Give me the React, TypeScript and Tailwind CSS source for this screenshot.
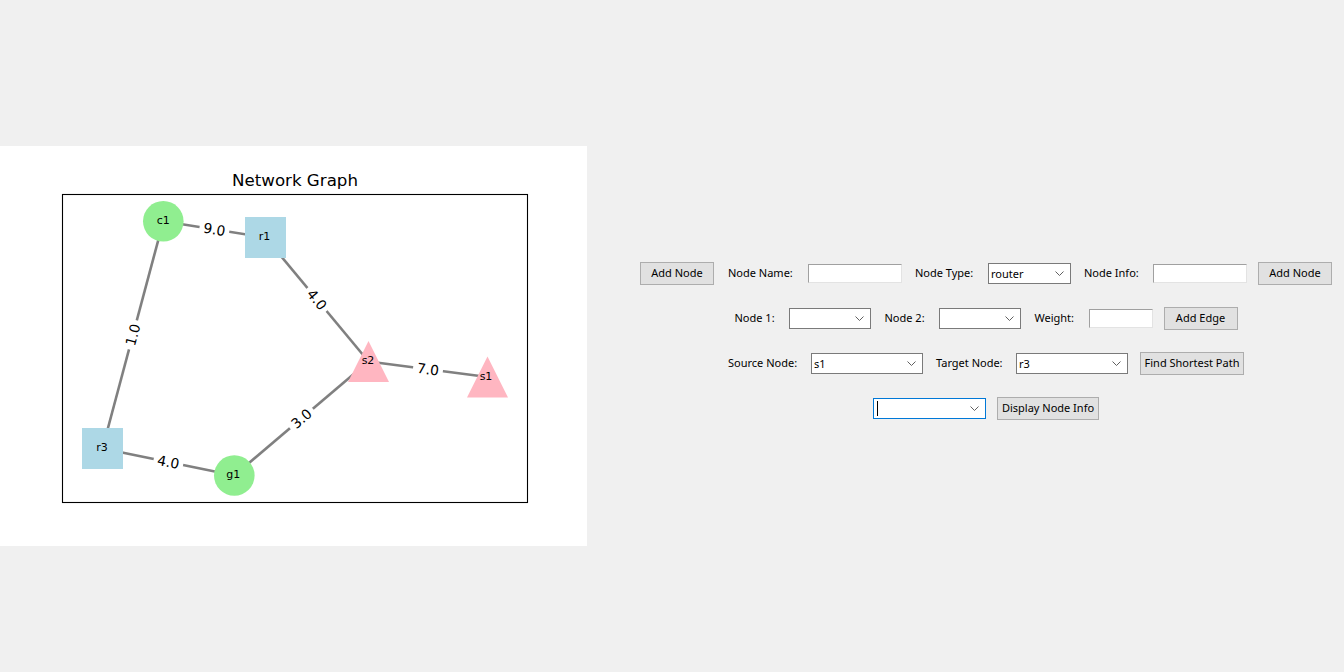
import React from "react";

const DJ = "'DejaVu Sans', 'Liberation Sans', sans-serif";

type EL = { x: number; y: number; a: number; t: string };

function EdgeLabel({ x, y, a, t }: EL) {
  const w = 30;
  const h = 18;
  return (
    <g transform={`translate(${x} ${y}) rotate(${a})`}>
      <rect x={-w / 2} y={-h / 2} width={w} height={h} rx={4} fill="#ffffff" />
      <text
        x={0}
        y={0}
        textAnchor="middle"
        dominantBaseline="central"
        fontFamily={DJ}
        fontSize={13.9}
        fill="#000"
      >
        {t}
      </text>
    </g>
  );
}

function Graph() {
  const c1 = { x: 163.3, y: 221.3 };
  const r1 = { x: 265.5, y: 237.5 };
  const s2 = { x: 368.5, y: 361.5 };
  const s1 = { x: 487.5, y: 377 };
  const r3 = { x: 102.5, y: 448.5 };
  const g1 = { x: 234.3, y: 475.5 };
  const edges = [
    [c1, r1],
    [r1, s2],
    [s2, s1],
    [g1, s2],
    [r3, g1],
    [r3, c1],
  ];
  const labels: EL[] = [
    { x: 214.4, y: 229.4, a: 9, t: "9.0" },
    { x: 317, y: 299.5, a: 50.3, t: "4.0" },
    { x: 428, y: 369.3, a: 7.4, t: "7.0" },
    { x: 301.4, y: 418.5, a: -40.3, t: "3.0" },
    { x: 168.4, y: 462, a: 11.6, t: "4.0" },
    { x: 132.9, y: 334.9, a: -75, t: "1.0" },
  ];
  const nodeText = (x: number, y: number, t: string) => (
    <text
      x={x}
      y={y}
      textAnchor="middle"
      dominantBaseline="central"
      fontFamily={DJ}
      fontSize={11}
      fill="#000"
    >
      {t}
    </text>
  );
  const tri = (p: { x: number; y: number }) =>
    `${p.x},${p.y - 20.5} ${p.x - 20.5},${p.y + 20.5} ${p.x + 20.5},${p.y + 20.5}`;
  return (
    <svg width={587} height={400} viewBox="0 146 587 400" className="block">
      <text
        x={295}
        y={180}
        textAnchor="middle"
        dominantBaseline="central"
        fontFamily={DJ}
        fontSize={16.67}
        fill="#000"
      >
        Network Graph
      </text>
      <rect x={62.5} y={194.5} width={465} height={308} fill="none" stroke="#000" strokeWidth={1.1} />
      {edges.map(([a, b], i) => (
        <line key={i} x1={a.x} y1={a.y} x2={b.x} y2={b.y} stroke="#808080" strokeWidth={2.6} />
      ))}
      {labels.map((l, i) => (
        <EdgeLabel key={i} {...l} />
      ))}
      <circle cx={c1.x} cy={c1.y} r={20.3} fill="#90ee90" />
      <circle cx={g1.x} cy={g1.y} r={20.3} fill="#90ee90" />
      <rect x={r1.x - 20.5} y={r1.y - 20.5} width={41} height={41} fill="#add8e6" />
      <rect x={r3.x - 20.5} y={r3.y - 20.5} width={41} height={41} fill="#add8e6" />
      <polygon points={tri(s2)} fill="#ffb6c1" />
      <polygon points={tri(s1)} fill="#ffb6c1" />
      {nodeText(c1.x, c1.y - 1, "c1")}
      {nodeText(r1.x - 1, r1.y - 1, "r1")}
      {nodeText(s2.x - 0.5, s2.y - 1.5, "s2")}
      {nodeText(s1.x - 1.5, s1.y - 1, "s1")}
      {nodeText(r3.x - 0.5, r3.y - 1, "r3")}
      {nodeText(g1.x - 1, g1.y - 1, "g1")}
    </svg>
  );
}

function Btn({ w, children }: { w: string; children: React.ReactNode }) {
  return (
    <div
      className={`${w} h-[23px] shrink-0 border border-[#adadad] bg-[#e1e1e1] flex items-center justify-center whitespace-nowrap`}
    >
      {children}
    </div>
  );
}

function Lbl({ w, children }: { w: string; children: React.ReactNode }) {
  return <div className={`${w} shrink-0 whitespace-nowrap`}>{children}</div>;
}

function Entry({ w }: { w: string }) {
  return (
    <div
      className={`${w} h-[19px] shrink-0 bg-white border-t border-l border-b border-r border-t-[#a0a0a0] border-l-[#a0a0a0] border-b-[#e3e3e3] border-r-[#e3e3e3]`}
    />
  );
}

function Chevron() {
  return (
    <svg width={9} height={5} viewBox="0 0 9 5" className="block">
      <polyline points="0.5,0.5 4.5,4.5 8.5,0.5" fill="none" stroke="#606060" strokeWidth={1} />
    </svg>
  );
}

function Combo({ w, value, focused }: { w: string; value?: string; focused?: boolean }) {
  return (
    <div
      className={`${w} h-[21px] shrink-0 bg-white border ${
        focused ? "border-[#0078d7]" : "border-[#7a7a7a]"
      } flex items-center pl-[2px] pr-[6px]`}
    >
      <div className="flex-1 flex items-center leading-none">
        {focused ? <div className="w-px h-[15px] bg-black ml-[1px]" /> : value}
      </div>
      <Chevron />
    </div>
  );
}

export default function App() {
  return (
    <div className="w-[1344px] h-[672px] bg-[#f0f0f0] flex overflow-hidden">
      <div className="mt-[146px] w-[587px] h-[400px] bg-white shrink-0">
        <Graph />
      </div>
      <div className="flex-1 flex flex-col items-center pl-[41px] pt-[262px] gap-[22px] font-['Noto_Sans',sans-serif] text-[11px] text-black">
        <div className="flex items-center h-[23px]">
          <Btn w="w-[74px]">Add Node</Btn>
          <div className="w-[14px]" />
          <Lbl w="w-[80px]">Node Name:</Lbl>
          <Entry w="w-[94px]" />
          <div className="w-[13px]" />
          <Lbl w="w-[73px]">Node Type:</Lbl>
          <Combo w="w-[83px]" value="router" />
          <div className="w-[13px]" />
          <Lbl w="w-[69px]">Node Info:</Lbl>
          <Entry w="w-[94px]" />
          <div className="w-[11px]" />
          <Btn w="w-[74px]">Add Node</Btn>
        </div>
        <div className="flex items-center h-[23px]">
          <Lbl w="w-[54px]">Node 1:</Lbl>
          <Combo w="w-[82px]" />
          <div className="w-[14px]" />
          <Lbl w="w-[54px]">Node 2:</Lbl>
          <Combo w="w-[82px]" />
          <div className="w-[14px]" />
          <Lbl w="w-[54px]">Weight:</Lbl>
          <Entry w="w-[64px]" />
          <div className="w-[11px]" />
          <Btn w="w-[74px]">Add Edge</Btn>
        </div>
        <div className="flex items-center h-[23px]">
          <Lbl w="w-[83px]">Source Node:</Lbl>
          <Combo w="w-[112px]" value="s1" />
          <div className="w-[13px]" />
          <Lbl w="w-[80px]">Target Node:</Lbl>
          <Combo w="w-[112px]" value="r3" />
          <div className="w-[12px]" />
          <Btn w="w-[104px]">Find Shortest Path</Btn>
        </div>
        <div className="flex items-center h-[23px]">
          <Combo w="w-[113px]" focused />
          <div className="w-[11px]" />
          <Btn w="w-[102px]">Display Node Info</Btn>
        </div>
      </div>
    </div>
  );
}
